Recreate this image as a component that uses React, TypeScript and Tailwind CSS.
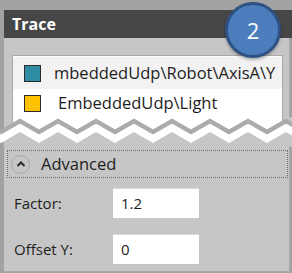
import React from "react";

const FONT = { fontFamily: '"Open Sans", "Noto Sans", sans-serif' };

const TOP = "-18,4 1,15 20,4 39,15 58,4 77,15 96,4 115,15 134,4 153,15 172,4 191,15 210,4 229,15 248,4 267,15 286,4 305,15";
const BAND = "-18,4 1,15 20,4 39,15 58,4 77,15 96,4 115,15 134,4 153,15 172,4 191,15 210,4 229,15 248,4 267,15 286,4 305,15 305,26 286,15 267,26 248,15 229,26 210,15 191,26 172,15 153,26 134,15 115,26 96,15 77,26 58,15 39,26 20,15 1,26 -18,15";
const LIST = "12,0 283,0 283,10.2 267,15 248,4 229,15 210,4 191,15 172,4 153,15 134,4 115,15 96,4 77,15 58,4 39,15 20,4 12,8.6";

function Zigzag() {
  return (
    <svg width="292" height="30" viewBox="0 0 292 30" className="block shrink-0">
      <rect x="0" y="0" width="292" height="30" fill="#c6c6c6" />
      <rect x="0" y="0" width="4" height="30" fill="#a2a2a2" />
      <polygon points={LIST} fill="#ffffff" />
      <line x1="12.5" y1="0" x2="12.5" y2="10" stroke="#a9a9a9" strokeWidth="1" />
      <line x1="282.5" y1="0" x2="282.5" y2="11" stroke="#a9a9a9" strokeWidth="1" />
      <polygon points={BAND} fill="#ffffff" />
      <polyline points={TOP} fill="none" stroke="#ababab" strokeWidth="4.5" />
    </svg>
  );
}

export default function App() {
  return (
    <div className="relative w-[292px] h-[273px] overflow-hidden bg-[#a2a2a2] flex flex-col" style={FONT}>
      <div className="h-[10px] shrink-0" />
      <div className="ml-[4px] flex flex-col">
        <div className="h-[28px] bg-[#464646] flex items-center pl-[8px]">
          <span className="text-white font-bold text-[16px] leading-none">Trace</span>
        </div>
        <div className="bg-[#c6c6c6] pt-[17px] pl-[8px] pr-[5px] flex border-r border-[#a8a8a8] mr-[2px]">
          <div className="w-[271px] bg-white border-t border-l border-r border-[#a9a9a9] pt-[1px]">
            <div className="h-[32px] bg-[#f2f2f2] flex items-center pl-[11px]">
              <div className="w-[17px] h-[17px] shrink-0 bg-[#2f8da3] border-[1.5px] border-[#2b2b2b]" />
              <span className="ml-[13px] text-[16.5px] text-[#1e1e1e] whitespace-nowrap leading-none">mbeddedUdp\Robot\AxisA\Y</span>
            </div>
            <div className="h-[28px] flex items-center pl-[11px]">
              <div className="w-[17px] h-[17px] shrink-0 bg-[#ffc000] border-[1.5px] border-[#2b2b2b]" />
              <span className="ml-[17px] text-[16.5px] text-[#1e1e1e] whitespace-nowrap leading-none">EmbeddedUdp\Light</span>
            </div>
          </div>
        </div>
      </div>
      <Zigzag />
      <div className="ml-[4px] mr-[2px] bg-[#c6c6c6] border-r border-b border-[#a8a8a8] h-[125px] flex flex-col pl-[3px] pt-[3px]">
        <div className="w-[281px] h-[28px] border border-dotted border-[#6f6f6f] flex items-center pl-[3px]">
          <div className="w-[19px] h-[19px] rounded-full border border-[#a8a8a8] flex items-center justify-center">
            <svg width="12" height="10" viewBox="0 0 12 10">
              <polyline points="2.5,7 6,3.5 9.5,7" fill="none" stroke="#2a2a2a" strokeWidth="2" />
            </svg>
          </div>
          <span className="ml-[11px] text-[16.5px] text-[#1e1e1e] leading-none">Advanced</span>
        </div>
        <div className="mt-[10px] flex items-center pl-[7px]">
          <span className="w-[99px] text-[15px] text-[#1e1e1e]">Factor:</span>
          <div className="w-[86px] h-[30px] bg-white border-t border-[#d8d8d8] flex items-center pl-[8px] text-[15px] text-[#1e1e1e]">1.2</div>
        </div>
        <div className="mt-[16px] flex items-center pl-[7px]">
          <span className="w-[99px] text-[15px] text-[#1e1e1e]">Offset Y:</span>
          <div className="w-[86px] h-[30px] bg-white border-t border-[#d8d8d8] flex items-center pl-[8px] text-[15px] text-[#1e1e1e]">0</div>
        </div>
      </div>
      <div className="absolute left-[225px] top-[2px] w-[56px] h-[56px] rounded-full bg-[#4c7dbd] border-[3px] border-[#2e5284] flex items-center justify-center shadow-[0_2px_3px_rgba(0,0,0,0.3)]">
        <span className="text-white text-[22px] leading-none" style={{ fontFamily: '"Open Sans", sans-serif' }}>2</span>
      </div>
    </div>
  );
}
